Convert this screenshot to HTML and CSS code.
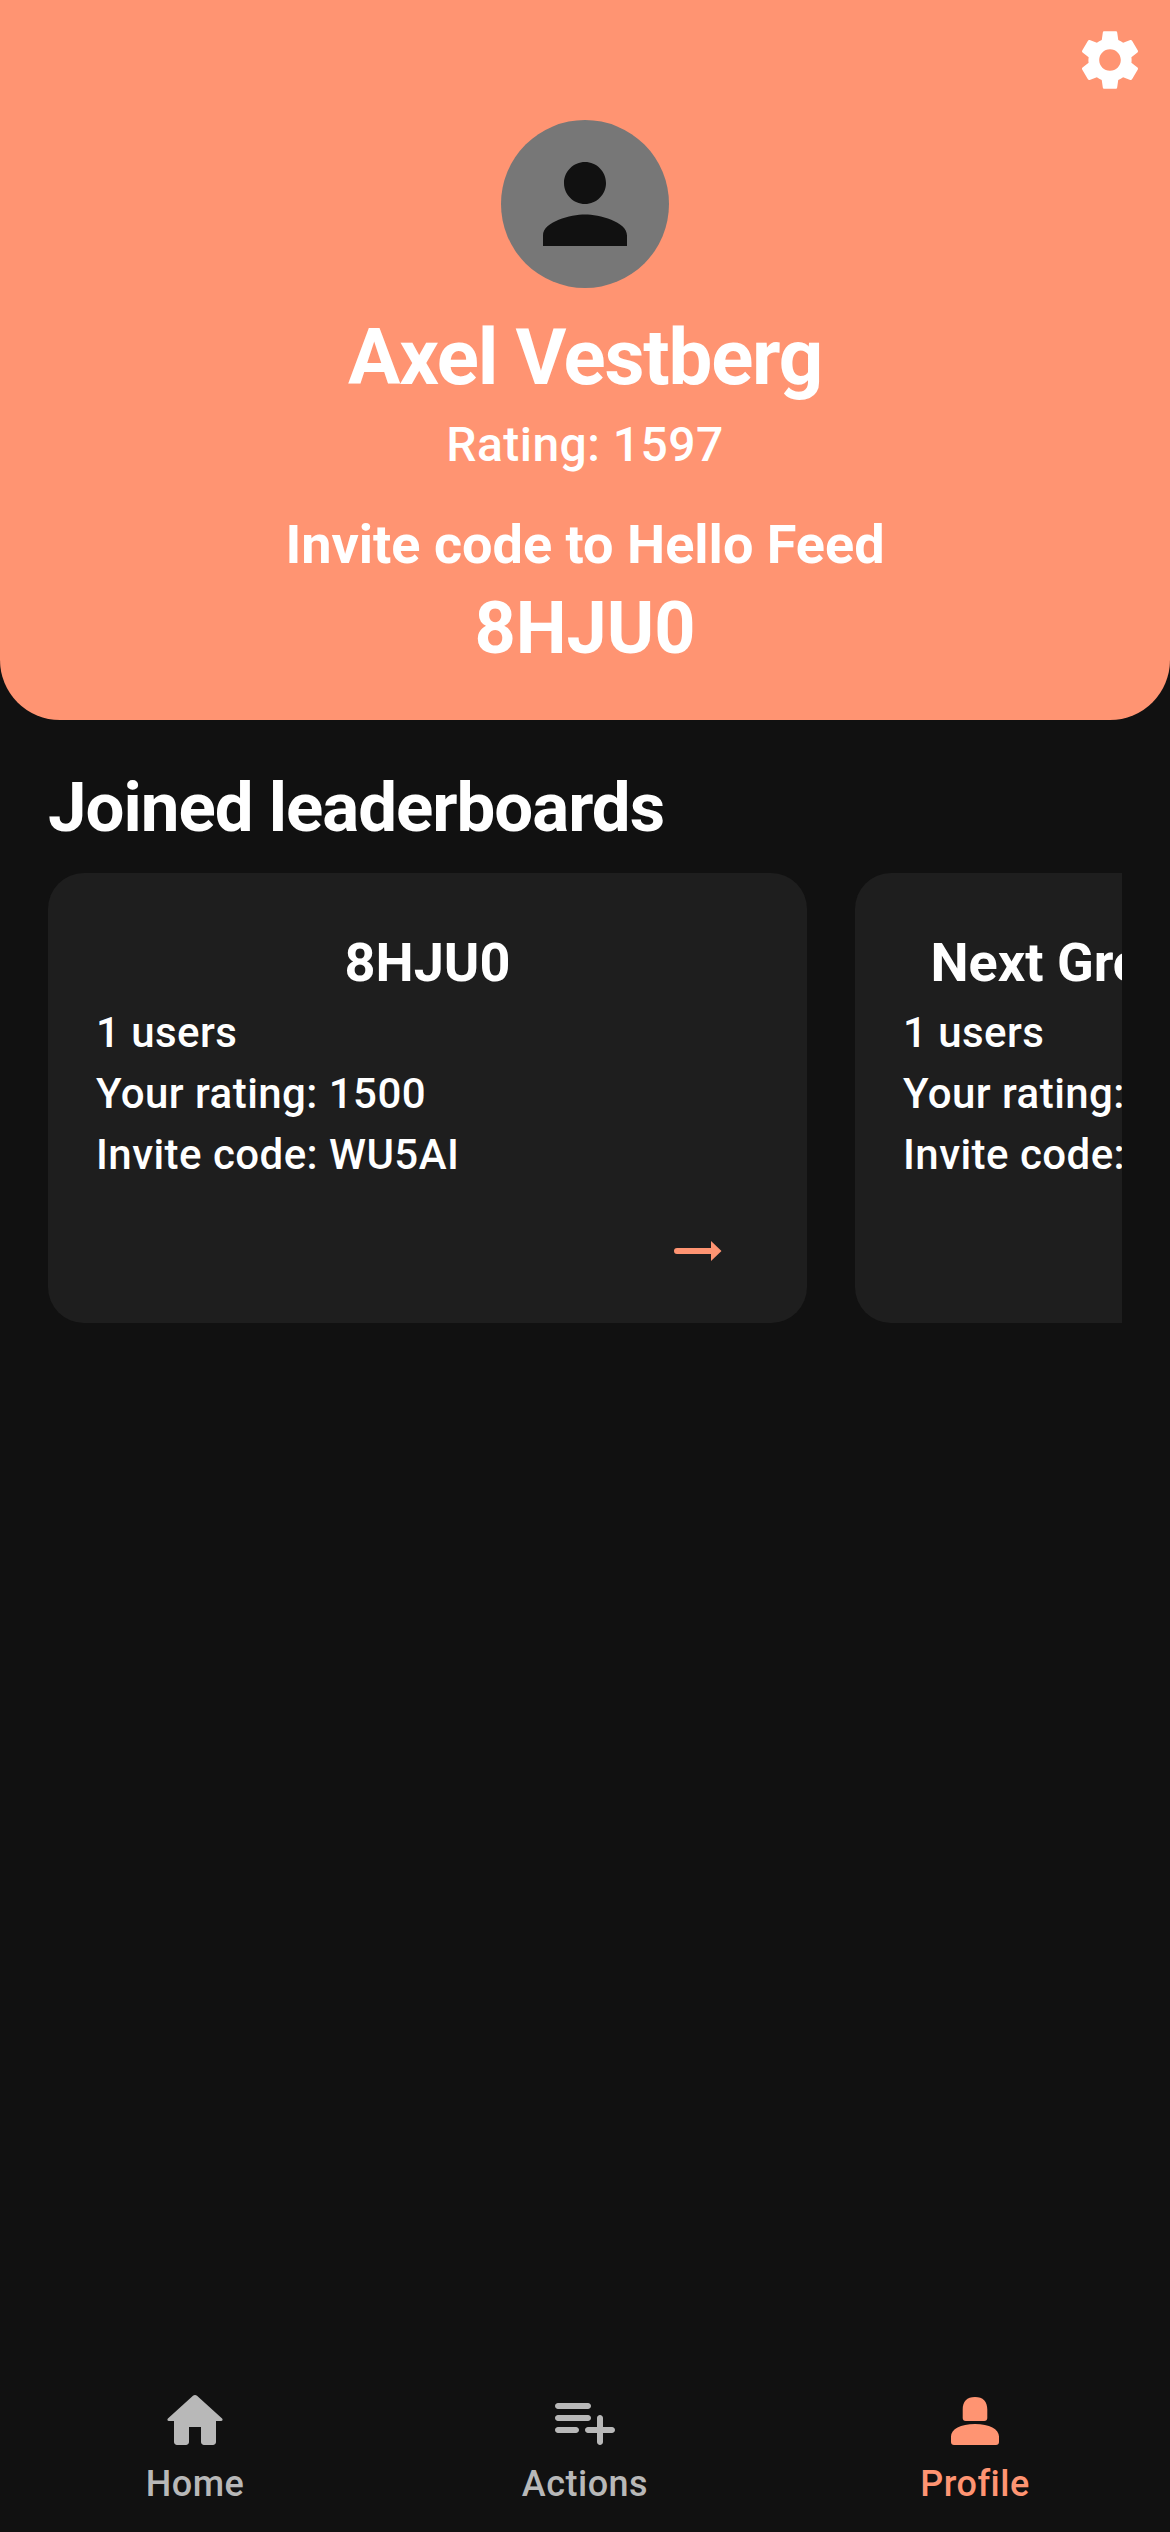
FILE: index.html
```html
<!DOCTYPE html>
<html lang="en">
<head>
<meta charset="utf-8">
<title>Profile</title>
<link rel="stylesheet" href="styles.css">
</head>
<body>
<div class="app">
  <header class="hero">
    <div class="hero-top">
      <svg class="gear" viewBox="0 0 24 24"><path d="M19.14 12.94c.04-.3.06-.61.06-.94 0-.32-.02-.64-.07-.94l2.03-1.58c.18-.14.23-.41.12-.61l-1.92-3.32c-.12-.22-.37-.29-.59-.22l-2.39.96c-.5-.38-1.03-.7-1.62-.94l-.36-2.54c-.04-.24-.24-.41-.48-.41h-3.84c-.24 0-.43.17-.47.41l-.36 2.54c-.59.24-1.13.57-1.62.94l-2.39-.96c-.22-.08-.47 0-.59.22L2.74 8.87c-.12.21-.08.47.12.61l2.03 1.58c-.05.3-.09.63-.09.94s.02.64.07.94l-2.03 1.58c-.18.14-.23.41-.12.61l1.92 3.32c.12.22.37.29.59.22l2.39-.96c.5.38 1.03.7 1.62.94l.36 2.54c.05.24.24.41.48.41h3.84c.24 0 .44-.17.47-.41l.36-2.54c.59-.24 1.13-.56 1.62-.94l2.39.96c.22.08.47 0 .59-.22l1.92-3.32c.12-.22.07-.47-.12-.61l-2.01-1.58zM12 15.6c-1.98 0-3.6-1.62-3.6-3.6s1.62-3.6 3.6-3.6 3.6 1.62 3.6 3.6-1.62 3.6-3.6 3.6z"/></svg>
    </div>
    <div class="avatar">
      <svg class="avatar-icon" viewBox="0 0 24 24"><path d="M12 12c2.21 0 4-1.79 4-4s-1.79-4-4-4-4 1.79-4 4 1.79 4 4 4zm0 2c-2.67 0-8 1.34-8 4v2h16v-2c0-2.66-5.33-4-8-4z"/></svg>
    </div>
    <h1 class="name">Axel Vestberg</h1>
    <p class="rating">Rating: 1597</p>
    <p class="invite-title">Invite code to Hello Feed</p>
    <p class="invite-code">8HJU0</p>
  </header>

  <main class="content">
    <h2 class="section-title">Joined leaderboards</h2>
    <div class="cards">
      <article class="card">
        <h3 class="card-title">8HJU0</h3>
        <p class="card-line">1 users</p>
        <p class="card-line">Your rating: 1500</p>
        <p class="card-line">Invite code: WU5AI</p>
        <div class="card-foot">
          <svg class="arrow" viewBox="0 0 24 24"><path d="M17.6 8v2.8H4a1.2 1.2 0 0 0 0 2.4h13.6V16l4.2-4z"/></svg>
        </div>
      </article>
      <article class="card">
        <h3 class="card-title">Next Group: Leaderboard</h3>
        <p class="card-line">1 users</p>
        <p class="card-line">Your rating: 1500</p>
        <p class="card-line">Invite code: 8HJU0</p>
        <div class="card-foot">
          <svg class="arrow" viewBox="0 0 24 24"><path d="M17.6 8v2.8H4a1.2 1.2 0 0 0 0 2.4h13.6V16l4.2-4z"/></svg>
        </div>
      </article>
    </div>
  </main>

  <nav class="tabs">
    <div class="tab">
      <svg class="tab-icon" viewBox="0 0 24 24"><path d="M10 19v-5h4v5c0 .55.45 1 1 1h3c.55 0 1-.45 1-1v-7h1.7c.46 0 .68-.57.33-.87L12.67 3.6c-.38-.34-.96-.34-1.34 0l-8.36 7.53c-.34.3-.13.87.33.87H5v7c0 .55.45 1 1 1h3c.55 0 1-.45 1-1z"/></svg>
      <span class="tab-label">Home</span>
    </div>
    <div class="tab">
      <svg class="tab-icon" viewBox="0 0 24 24"><path d="M13 10H3c-.55 0-1 .45-1 1s.45 1 1 1h10c.55 0 1-.45 1-1s-.45-1-1-1zm0-4H3c-.55 0-1 .45-1 1s.45 1 1 1h10c.55 0 1-.45 1-1s-.45-1-1-1zm5 8v-3c0-.55-.45-1-1-1s-1 .45-1 1v3h-3c-.55 0-1 .45-1 1s.45 1 1 1h3v3c0 .55.45 1 1 1s1-.45 1-1v-3h3c.55 0 1-.45 1-1s-.45-1-1-1h-3zM3 16h6c.55 0 1-.45 1-1s-.45-1-1-1H3c-.55 0-1 .45-1 1s.45 1 1 1z"/></svg>
      <span class="tab-label">Actions</span>
    </div>
    <div class="tab tab-active">
      <svg class="tab-icon" viewBox="0 0 24 24"><path d="M12 4c2.7 0 4.1 1.5 4.1 4.2V11c0 .6-.4 1-1 1H8.900c-.6 0-1-.4-1-1V8.200C7.900 5.500 9.300 4 12 4zM12 13c4.800 0 8 1.700 8 4.200V19c0 .6-.4 1-1 1H5c-.6 0-1-.4-1-1v-1.800C4 14.700 7.200 13 12 13z"/></svg>
      <span class="tab-label">Profile</span>
    </div>
  </nav>
</div>
</body>
</html>
```

FILE: styles.css
```css
* {
  box-sizing: border-box;
}

html,
body {
  margin: 0;
  padding: 0;
  background: #111111;
}

body {
  font-family: Roboto, "Liberation Sans", sans-serif;
  color: #ffffff;
}

p,
h1,
h2,
h3 {
  margin: 0;
}

.app {
  display: flex;
  flex-direction: column;
  width: 1170px;
  height: 2532px;
  overflow: hidden;
}

.hero {
  display: flex;
  flex-direction: column;
  align-items: center;
  height: 720px;
  padding: 24px 24px 0;
  background: #ff9472;
  border-radius: 0 0 60px 60px;
  text-align: center;
}

.hero-top {
  display: flex;
  justify-content: flex-end;
  align-self: stretch;
  height: 96px;
}

.gear {
  width: 72px;
  height: 72px;
  fill: #ffffff;
}

.avatar {
  display: flex;
  align-items: center;
  justify-content: center;
  width: 168px;
  height: 168px;
  border-radius: 50%;
  background: #777777;
}

.avatar-icon {
  width: 126px;
  height: 126px;
  fill: #111111;
}

.name {
  margin-top: 24px;
  font-size: 78px;
  line-height: 92px;
  font-weight: 700;
  letter-spacing: -1.2px;
}

.rating {
  margin-top: 13px;
  font-size: 48px;
  line-height: 56px;
  font-weight: 500;
  letter-spacing: 0.45px;
}

.invite-title {
  margin-top: 40px;
  font-size: 54px;
  line-height: 64px;
  font-weight: 700;
}

.invite-code {
  margin-top: 10px;
  font-size: 72px;
  line-height: 84px;
  font-weight: 700;
}

.content {
  flex: 1;
  padding: 49px 48px 0;
}

.section-title {
  font-size: 69px;
  line-height: 78px;
  font-weight: 700;
  letter-spacing: -1px;
}

.cards {
  display: flex;
  gap: 48px;
  margin-top: 26px;
  overflow: hidden;
}

.card {
  flex: 0 0 759px;
  height: 450px;
  padding: 58px 48px 0;
  border-radius: 36px;
  background: #1e1e1e;
}

.card-title {
  margin-bottom: 7px;
  font-size: 54px;
  line-height: 64px;
  font-weight: 700;
  text-align: center;
  white-space: nowrap;
}

.card-line {
  font-size: 42px;
  line-height: 61px;
  font-weight: 500;
  letter-spacing: 0.45px;
  white-space: nowrap;
}

.card-foot {
  display: flex;
  justify-content: flex-end;
  margin-top: 36px;
  padding-right: 32px;
}

.arrow {
  width: 60px;
  height: 60px;
  fill: #ff9472;
}

.tabs {
  display: grid;
  grid-template-columns: repeat(3, 1fr);
  padding-bottom: 27px;
}

.tab {
  display: flex;
  flex-direction: column;
  align-items: center;
  gap: 6px;
  color: #b8b8b8;
}

.tab-active {
  color: #ff9472;
}

.tab-icon {
  width: 72px;
  height: 72px;
  fill: currentColor;
}

.tab-label {
  font-size: 36px;
  line-height: 42px;
  font-weight: 500;
  letter-spacing: 0.5px;
}
```
